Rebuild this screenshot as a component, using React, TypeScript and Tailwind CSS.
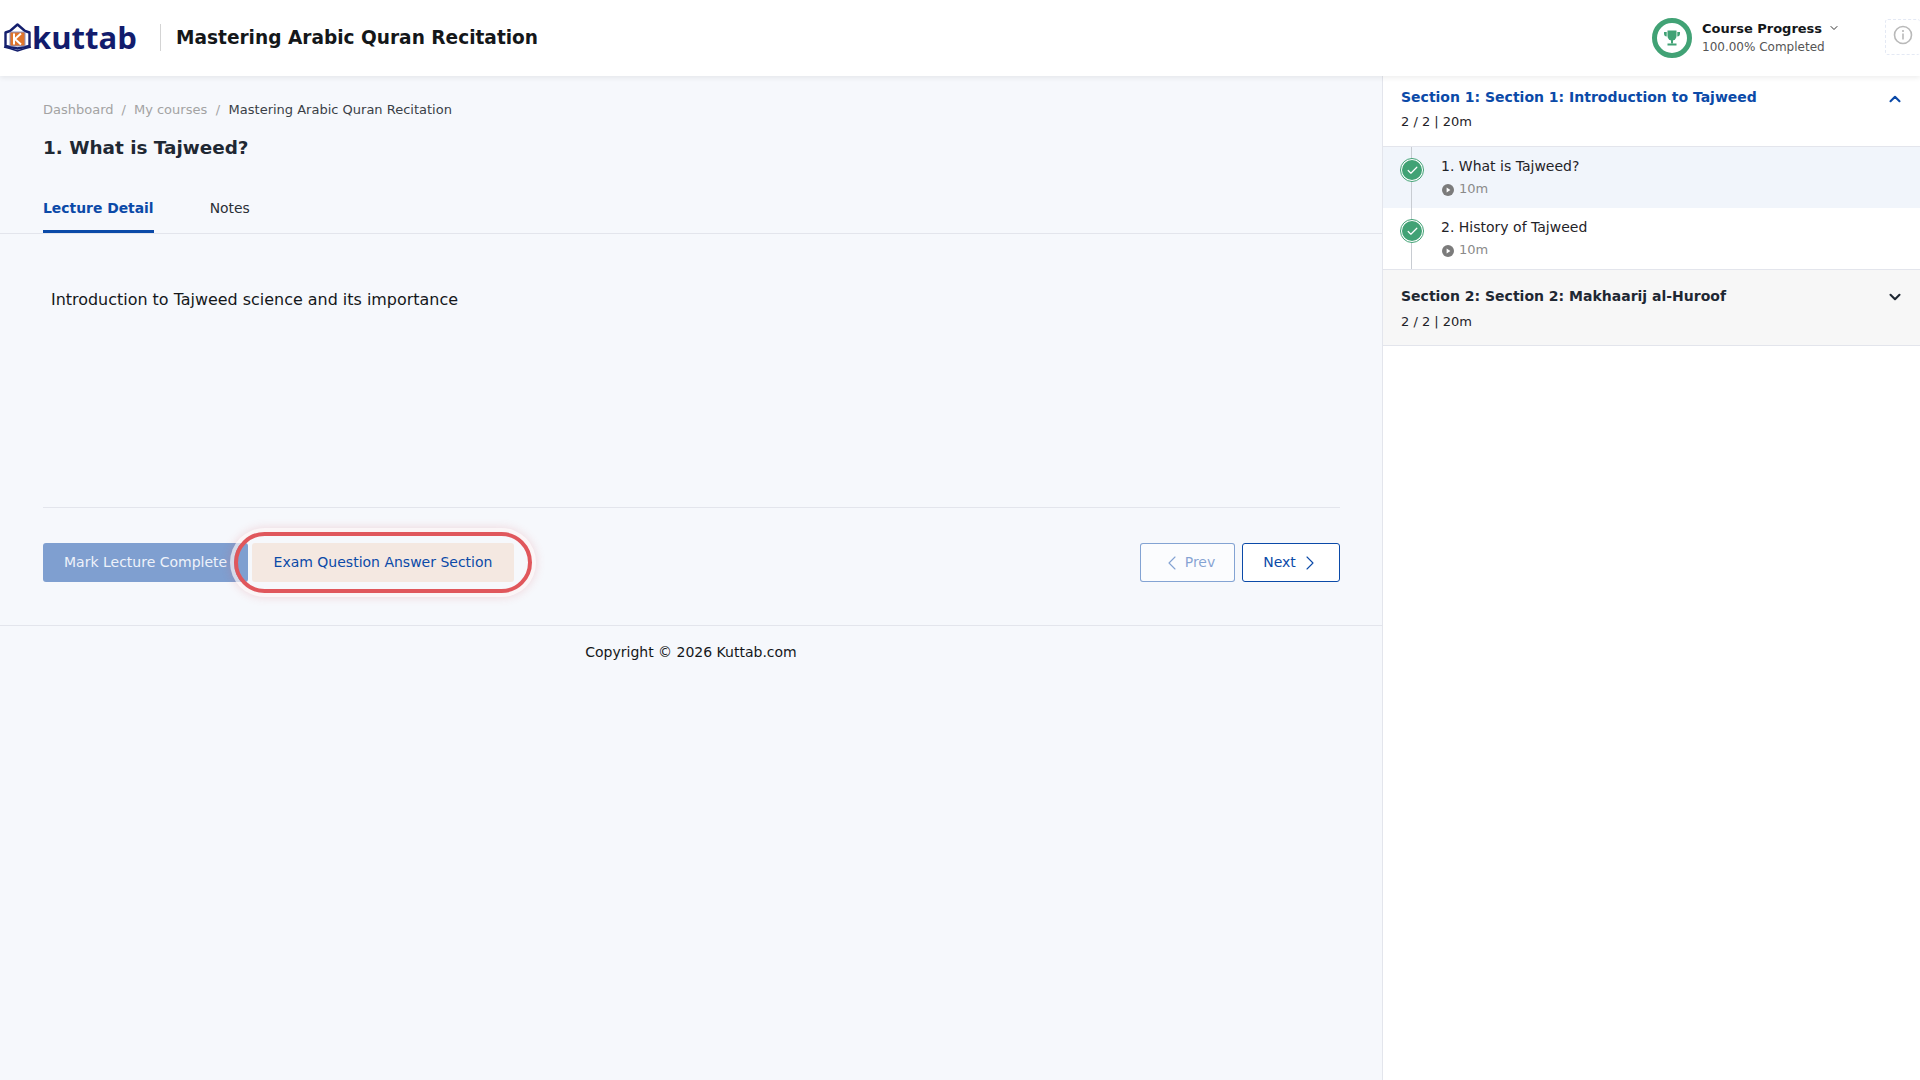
import { ChevronDown, ChevronLeft, ChevronRight, ChevronUp, Check } from "lucide-react";

function LogoMark() {
  return (
    <svg width="29" height="30" viewBox="0 0 29 30" className="shrink-0">
      <path d="M2.500 24V10.500l4.500-1.500L14.500 2.500 22 9l4.500 1.500V24l-12 2.500z" fill="#fff" stroke="#141f6e" strokeWidth="2.400" strokeLinejoin="round" />
      <rect x="7" y="10" width="15" height="14" rx="1" fill="#e0742a" stroke="#8a94c4" strokeWidth="1" />
      <path d="M11 11.500v11M18 11.500l-6 5.500 6 5.500" fill="none" stroke="#fff" strokeWidth="2" />
      <path d="M1 25l6 1.500 7.500 2.500 7.500-2.500 6-1.500" fill="none" stroke="#141f6e" strokeWidth="1.600" />
    </svg>
  );
}

function TrophyIcon() {
  return (
    <svg width="18" height="18" viewBox="0 0 18 18" fill="#41a275">
      <path d="M4.500 1.500h9v5.500a4.500 4.500 0 0 1-9 0z" />
      <path d="M1 3h2.700v4.500C2 7.500 1 6.200 1 4.500zM17 3h-2.700v4.500C16 7.500 17 6.200 17 4.500z" />
      <rect x="8" y="11" width="2" height="3.500" />
      <rect x="4.500" y="14.500" width="9" height="2" />
    </svg>
  );
}

function PlayDot() {
  return (
    <svg width="12" height="12" viewBox="0 0 12 12" className="mt-[2px] ml-[1px] shrink-0">
      <circle cx="6" cy="6" r="6" fill="#7b7b7b" />
      <path d="M4.600 3.600v4.800L8.400 6z" fill="#fff" />
    </svg>
  );
}

function LessonRow({ title, active }: { title: string; active?: boolean }) {
  return (
    <div className={`relative h-[61px] pl-[58px] pt-[8px] ${active ? "bg-[#f1f5fb]" : "bg-white"}`}>
      <span className="absolute top-0 bottom-0 left-[28px] w-px bg-[#c8ccd2]" />
      <div className="absolute left-[17px] top-[11px] flex h-[24px] w-[24px] items-center justify-center rounded-full border border-[#41a275] bg-white">
        <div className="flex h-[20px] w-[20px] items-center justify-center rounded-full bg-[#41a275]">
          <Check size={13} strokeWidth={2.2} className="text-white" />
        </div>
      </div>
      <div className="relative text-[14px] leading-[22px] text-[#1f2328]">{title}</div>
      <div className="relative mt-[1px] flex items-center gap-[5px] text-[13px] leading-[22px] text-[#8a8a8a]">
        <PlayDot />
        <span>10m</span>
      </div>
    </div>
  );
}

export default function App() {
  return (
    <div className="flex h-[1080px] w-[1920px] flex-col overflow-hidden bg-[#f6f8fc] font-['DejaVu_Sans',sans-serif]">
      {/* Header */}
      <header className="relative z-10 flex h-[76px] shrink-0 items-center bg-white shadow-[0_2px_5px_rgba(0,0,0,0.07)]">
        <div className="mb-[2px] flex w-[160px] items-center pl-[3px]">
          <LogoMark />
          <span className="font-['Open_Sans',sans-serif] text-[31px] leading-none font-bold text-[#121c6d]">kuttab</span>
        </div>
        <div className="mb-[1px] h-[27px] w-px bg-[#d4d4d4]" />
        <h1 className="mb-[1px] ml-[15px] text-[18.560px] leading-[28px] font-bold text-[#14171a]">Mastering Arabic Quran Recitation</h1>
        <div className="ml-auto flex items-center">
          <div className="flex h-[40px] w-[40px] items-center justify-center rounded-full border-[5px] border-[#41a275]">
            <TrophyIcon />
          </div>
          <div className="mb-[1px] ml-[10px] w-[183px]">
            <div className="flex items-center text-[13px] leading-[19px] font-bold text-[#14171a]">
              Course Progress
              <ChevronDown size={12} strokeWidth={2} className="ml-[6px] text-[#333]" />
            </div>
            <div className="text-[12px] leading-[19px] text-[#555]">100.00% Completed</div>
          </div>
          <div className="relative mb-[2px] flex h-[36px] w-[35px] items-center justify-center rounded-[3px] border-y border-l border-dashed border-[#e4e9f4] pb-[4px]">
            <svg width="20" height="20" viewBox="0 0 20 20" fill="none" stroke="#b9b9b9" strokeWidth="1.600">
              <circle cx="10" cy="10" r="8.500" />
              <path d="M10 8.500v6M10 5v2" />
            </svg>
          </div>
        </div>
      </header>

      <div className="flex min-h-0 flex-1">
        {/* Main */}
        <main className="w-[1382px] shrink-0">
          <div className="pl-[43px] pr-[42px] pt-[25px]">
            <nav className="flex items-center text-[13px] leading-[18px] text-[#a3a3a3]">
              <span>Dashboard</span>
              <span className="mx-[8px]">/</span>
              <span>My courses</span>
              <span className="mx-[8.500px]">/</span>
              <span className="text-[#3a3f47]">Mastering Arabic Quran Recitation</span>
            </nav>
            <h2 className="mt-[15px] text-[18.400px] leading-[27px] font-bold text-[#1f2833]">1. What is Tajweed?</h2>
          </div>

          <div className="mt-[27px] flex gap-[56px] border-b border-[#e3e5ec] px-[43px] text-[13.900px]">
            <div className="h-[45px] border-b-[3px] border-[#0b4aa8] pt-[10px] leading-[20px] font-bold text-[#0b4aa8]">Lecture Detail</div>
            <div className="pt-[10px] leading-[20px] text-[#2a2f36]">Notes</div>
          </div>

          <div className="pl-[43px] pr-[42px]">
            <div className="h-[274px] border-b border-[#e3e5ec] pt-[55px] pl-[8px] text-[15.950px] leading-[22px] text-[#14171a]">
              Introduction to Tajweed science and its importance
            </div>
            <div className="flex h-[117px] items-start pt-[35px] text-[14px]">
              <button className="h-[39px] w-[205px] rounded-[3px] bg-[#7f9fd0] pl-[21px] text-left text-[#eef2fa]">Mark Lecture Complete</button>
              <div className="relative ml-[4px]">
                <button className="h-[39px] w-[262px] rounded-[3px] bg-[#f4e8e1] text-center text-[#0b4aa8]">Exam Question Answer Section</button>
                <span className="pointer-events-none absolute -inset-x-[18px] -inset-y-[11px] rounded-full border-[4px] border-[#e0575c] shadow-[0_0_0_4px_rgba(255,255,255,0.65),0_0_8px_5px_rgba(224,87,92,0.18)]" />
              </div>
              <div className="ml-auto flex gap-[7px]">
                <button className="flex h-[39px] w-[95px] items-center justify-center gap-[1px] rounded-[3px] border border-[#0b4aa8]/50 bg-white/50 text-[#0b4aa8]/50">
                  <ChevronLeft size={24} strokeWidth={1.1} />
                  Prev
                </button>
                <button className="flex h-[39px] w-[98px] items-center justify-center gap-[2px] rounded-[3px] border border-[#0b4aa8] bg-white pl-[3px] text-[#0b4aa8]">
                  Next
                  <ChevronRight size={24} strokeWidth={1.1} />
                </button>
              </div>
            </div>
          </div>

          <footer className="border-t border-[#e3e5ec] pt-[15px] text-center text-[14px] leading-[22px] text-[#14171a]">Copyright © 2026 Kuttab.com</footer>
        </main>

        {/* Course content */}
        <aside className="w-[538px] shrink-0 border-l border-[#e3e5ec] bg-white">
          <div className="relative h-[71px] border-b border-[#e3e5ec] pt-[11px] pl-[18px]">
            <div className="text-[14px] leading-[20px] font-bold text-[#0b4aa8]">Section 1: Section 1: Introduction to Tajweed</div>
            <div className="mt-[5px] text-[13px] leading-[20px] text-[#1f2328]">2 / 2 | 20m</div>
            <ChevronUp size={18} strokeWidth={2.800} className="absolute top-[14px] right-[16px] text-[#0b4aa8]" />
          </div>
          <div className="border-b border-[#e3e5ec]">
            <LessonRow title="1. What is Tajweed?" active />
            <LessonRow title="2. History of Tajweed" />
          </div>
          <div className="relative h-[76px] border-b border-[#e3e5ec] bg-[#f7f7f7] pt-[16px] pl-[18px]">
            <div className="text-[14px] leading-[20px] font-bold text-[#1f2833]">Section 2: Section 2: Makhaarij al-Huroof</div>
            <div className="mt-[6px] text-[13px] leading-[20px] text-[#1f2328]">2 / 2 | 20m</div>
            <ChevronDown size={18} strokeWidth={2.800} className="absolute top-[18px] right-[16px] text-[#1f2833]" />
          </div>
        </aside>
      </div>
    </div>
  );
}
